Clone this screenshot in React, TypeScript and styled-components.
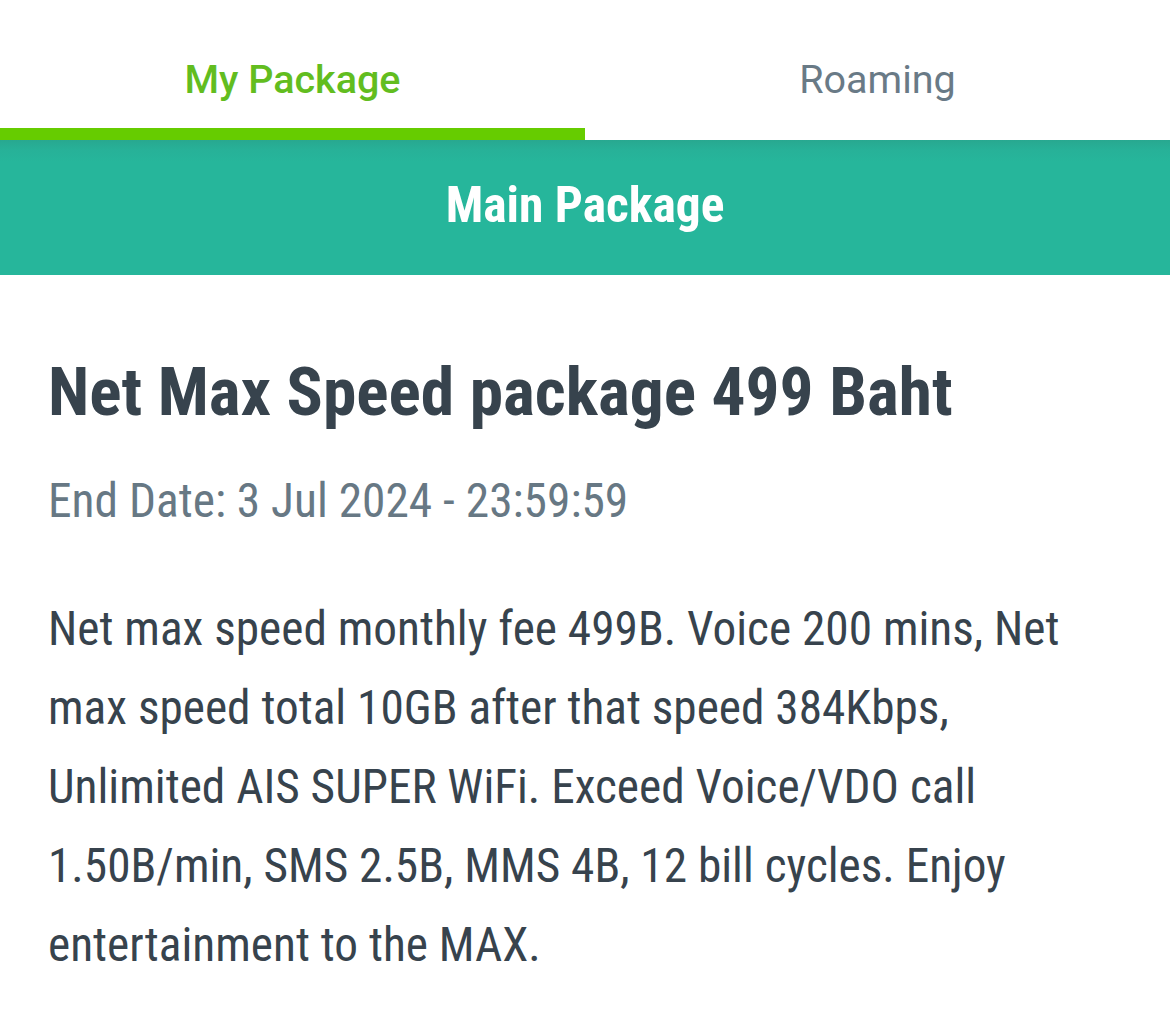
import React, { useState } from "react";
import styled, { createGlobalStyle } from "styled-components";

const Global = createGlobalStyle`
  html, body { margin: 0; padding: 0; background: #ffffff; }
  body {
    font-family: "Roboto Condensed", Roboto, "Liberation Sans", Arial, sans-serif;
    -webkit-font-smoothing: antialiased;
  }
`;

const Page = styled.div`
  width: 1170px;
  min-height: 1019px;
  background: #ffffff;
`;

const TabBar = styled.nav`
  display: grid;
  grid-template-columns: 1fr 1fr;
  height: 140px;
  background: #ffffff;
`;

const Tab = styled.button<{ $active: boolean }>`
  appearance: none;
  background: transparent;
  border: 0;
  border-bottom: 12px solid ${(p) => (p.$active ? "#66cc00" : "transparent")};
  box-sizing: border-box;
  height: 140px;
  margin: 0;
  padding: 60px 0 0;
  display: flex;
  justify-content: center;
  align-items: flex-start;
  font-family: Roboto, "Liberation Sans", Arial, sans-serif;
  font-size: 39.5px;
  line-height: 40px;
  font-weight: ${(p) => (p.$active ? 500 : 400)};
  color: ${(p) => (p.$active ? "#62bd1f" : "#697a86")};
  cursor: pointer;
`;

const Banner = styled.header`
  height: 135px;
  box-sizing: border-box;
  padding-top: 41px;
  background: linear-gradient(to bottom, #28a890 0px, #27b198 10px, #26b69b 22px, #26b69b 100%);
  text-align: center;
  color: #ffffff;
  font-family: "Roboto Condensed", Roboto, sans-serif;
  font-weight: 700;
  font-size: 49.5px;
  line-height: 48px;
`;

const Content = styled.section`
  padding: 77px 48px 40px;
  display: flex;
  flex-direction: column;
`;

const Title = styled.h1`
  margin: 0;
  font-family: "Roboto Condensed", Roboto, sans-serif;
  font-weight: 700;
  font-size: 67.4px;
  line-height: 80px;
  color: #37434d;
`;

const EndDate = styled.p`
  margin: 39px 0 0;
  font-family: "Roboto Condensed", Roboto, sans-serif;
  font-weight: 400;
  font-size: 47.4px;
  line-height: 60px;
  color: #677884;
`;

const Description = styled.p`
  margin: 59px 0 0;
  font-family: "Roboto Condensed", Roboto, sans-serif;
  font-weight: 400;
  font-size: 47.3px;
  line-height: 79px;
  color: #37434d;
`;

export default function App() {
  const [tab, setTab] = useState<"package" | "roaming">("package");
  return (
    <>
      <Global />
      <Page>
        <TabBar>
          <Tab $active={tab === "package"} onClick={() => setTab("package")}>
            My Package
          </Tab>
          <Tab $active={tab === "roaming"} onClick={() => setTab("roaming")}>
            Roaming
          </Tab>
        </TabBar>
        <Banner>Main Package</Banner>
        <Content>
          <Title>Net Max Speed package 499 Baht</Title>
          <EndDate>End Date: 3 Jul 2024 - 23:59:59</EndDate>
          <Description>
            Net max speed monthly fee 499B. Voice 200 mins, Net max speed total 10GB after that speed
            384Kbps, Unlimited AIS SUPER WiFi. Exceed Voice/VDO call 1.50B/min, SMS 2.5B, MMS 4B, 12
            bill cycles. Enjoy entertainment to the MAX.
          </Description>
        </Content>
      </Page>
    </>
  );
}
